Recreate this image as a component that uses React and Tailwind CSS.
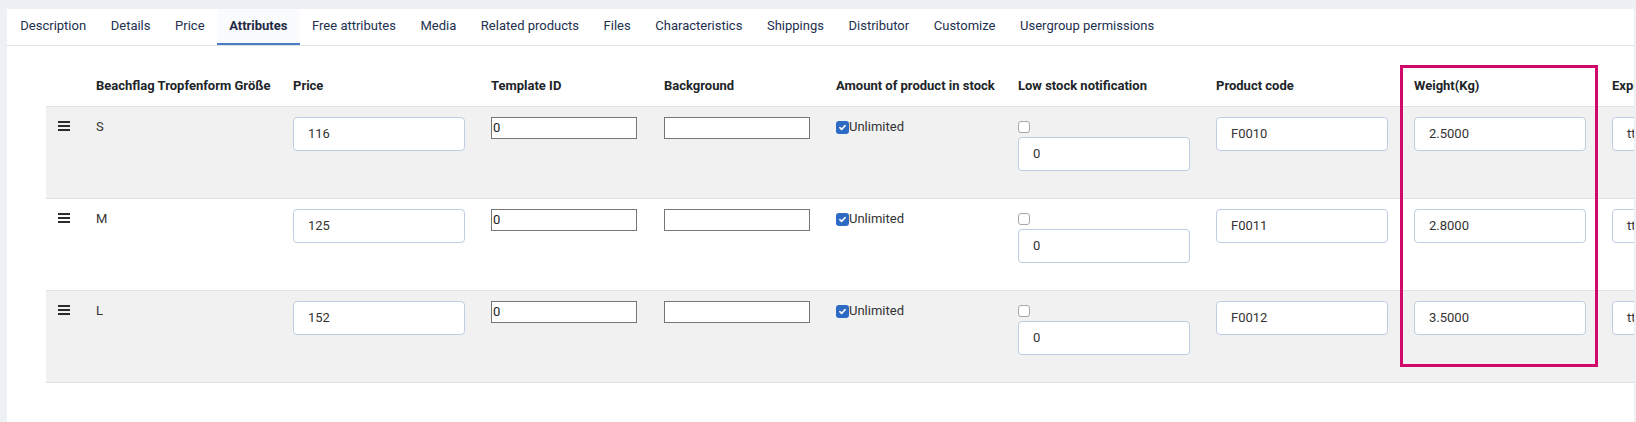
import React from "react";

const TABS = [
  "Description",
  "Details",
  "Price",
  "Attributes",
  "Free attributes",
  "Media",
  "Related products",
  "Files",
  "Characteristics",
  "Shippings",
  "Distributor",
  "Customize",
  "Usergroup permissions",
];

const ROWS = [
  { size: "S", price: "116", code: "F0010", weight: "2.5000" },
  { size: "M", price: "125", code: "F0011", weight: "2.8000" },
  { size: "L", price: "152", code: "F0012", weight: "3.5000" },
];

const DragHandle = () => (
  <div className="flex w-[12px] flex-col gap-[2px] pt-[4px]">
    <span className="block h-[2px] bg-[#2b2b2b]" />
    <span className="block h-[2px] bg-[#2b2b2b]" />
    <span className="block h-[2px] bg-[#2b2b2b]" />
  </div>
);

const CheckedBox = () => (
  <span className="flex h-[13px] w-[13px] items-center justify-center rounded-[3px] bg-[#2d6ac4]">
    <svg width="9" height="9" viewBox="0 0 12 12" fill="none">
      <path d="M2.5 6.2l2.3 2.3 4.7-5" stroke="white" strokeWidth="2" strokeLinecap="round" strokeLinejoin="round" />
    </svg>
  </span>
);

const Field = ({ value }) => (
  <div className="flex h-[34px] w-[172px] items-center rounded-[4px] border border-[#bfcde2] bg-white px-[14px] text-[13px] text-[#333]">
    {value}
  </div>
);

const PlainField = ({ value }) => (
  <div className="flex h-[22px] w-[146px] items-center border border-[#767676] bg-white px-[1px] text-[13px] text-[#222]">
    {value}
  </div>
);

export default function App() {
  return (
    <div className="min-h-[422px] bg-[#edf1f5] pl-[7px] pr-[2px] pt-[9px] font-['Roboto',sans-serif]">
      <div className="h-[413px] overflow-hidden bg-white">
        {/* Tabs */}
        <div className="flex border-b border-[#dde3ea] pl-[1px]">
          {TABS.map((t) => (
            <div
              key={t}
              className={
                t === "Attributes"
                  ? "flex h-[36px] items-center border-b-2 border-[#4b7bc4] bg-[#fafbfc] px-[12.3px] text-[13px] font-bold text-[#1f2a44]"
                  : "flex h-[36px] items-center border-b-2 border-transparent px-[12.3px] text-[13px] text-[#22304f]"
              }
            >
              {t}
            </div>
          ))}
        </div>

        {/* Attribute table */}
        <div className="relative ml-[39px] mt-[20px]">
          <table className="w-[1752px] table-fixed border-collapse text-[13px] text-[#333]">
            <colgroup>
              <col className="w-[38px]" />
              <col className="w-[197px]" />
              <col className="w-[198px]" />
              <col className="w-[173px]" />
              <col className="w-[172px]" />
              <col className="w-[182px]" />
              <col className="w-[198px]" />
              <col className="w-[198px]" />
              <col className="w-[198px]" />
              <col className="w-[198px]" />
            </colgroup>
            <thead>
              <tr className="border-b border-[#dee2e6]">
                <th className="px-3 py-[10px]" />
                {[
                  "Beachflag Tropfenform Größe",
                  "Price",
                  "Template ID",
                  "Background",
                  "Amount of product in stock",
                  "Low stock notification",
                  "Product code",
                  "Weight(Kg)",
                  "Expiry date",
                ].map((h) => (
                  <th
                    key={h}
                    className="whitespace-nowrap px-3 py-[10px] text-left text-[13px] leading-[20px] font-bold text-[#212529]"
                  >
                    {h}
                  </th>
                ))}
              </tr>
            </thead>
            <tbody>
              {ROWS.map((r, i) => (
                <tr
                  key={r.size}
                  className={
                    i % 2 === 0
                      ? "h-[92px] border-b border-[#dee2e6] bg-[#f1f1f1]"
                      : "h-[92px] border-b border-[#dee2e6] bg-white"
                  }
                >
                  <td className="px-3 pt-[10px] align-top">
                    <DragHandle />
                  </td>
                  <td className="px-3 pt-[10px] align-top leading-[20px]">{r.size}</td>
                  <td className="px-3 pt-[10px] align-top">
                    <Field value={r.price} />
                  </td>
                  <td className="px-3 pt-[10px] align-top">
                    <PlainField value="0" />
                  </td>
                  <td className="px-3 pt-[10px] align-top">
                    <PlainField value="" />
                  </td>
                  <td className="px-3 pt-[10px] align-top">
                    <div className="flex h-[20px] items-center">
                      <CheckedBox />
                      <span className="text-[13px] text-[#333]">Unlimited</span>
                    </div>
                  </td>
                  <td className="px-3 pt-[10px] align-top">
                    <div className="flex h-[20px] items-center">
                      <span className="h-[12px] w-[12px] rounded-[3px] border border-[#a8a8a8] bg-white" />
                    </div>
                    <Field value="0" />
                  </td>
                  <td className="px-3 pt-[10px] align-top">
                    <Field value={r.code} />
                  </td>
                  <td className="px-3 pt-[10px] align-top">
                    <Field value={r.weight} />
                  </td>
                  <td className="px-3 pt-[10px] align-top">
                    <Field value="tt.mm.jjjj" />
                  </td>
                </tr>
              ))}
            </tbody>
          </table>

          {/* highlight around the weight column */}
          <div className="pointer-events-none absolute left-[1354px] top-[-1px] h-[302px] w-[198px] border-[3px] border-[#d1086c]" />
        </div>
      </div>
    </div>
  );
}
